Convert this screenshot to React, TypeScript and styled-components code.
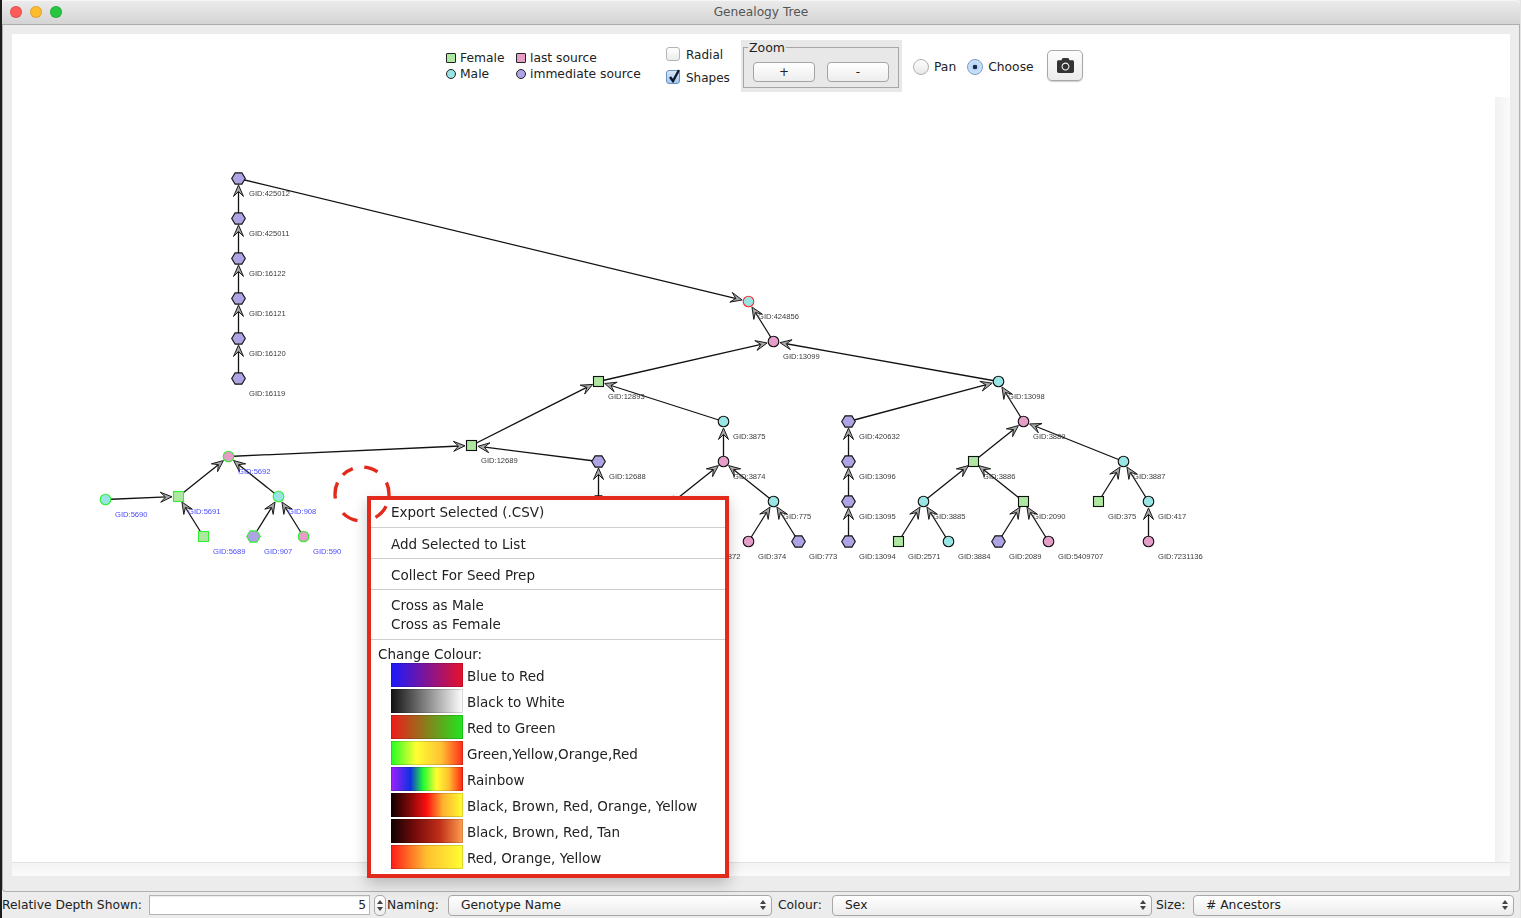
import React from "react";
import styled, { createGlobalStyle } from "styled-components";
import { FaCamera } from "react-icons/fa";

const UI_FONT = `"DejaVu Sans", "Liberation Sans", sans-serif`;

const GlobalStyle = createGlobalStyle`
  html, body {
    margin: 0;
    padding: 0;
    overflow: hidden;
    background: #dcdcdc;
  }
`;

const Root = styled.div`
  position: relative;
  width: 1521px;
  height: 918px;
  overflow: hidden;
  padding-left: 2px;
  box-sizing: border-box;
  font-family: ${UI_FONT};
  font-size: 12.3px;
  color: #222;
  background: linear-gradient(to right, #1c1c1c 2px, #e4e4e4 2px);
`;

const Window = styled.div`
  width: 1518px;
  height: 918px;
  display: flex;
  flex-direction: column;
  background: #ececec;
`;

const TitleBar = styled.div`
  height: 24px;
  flex: none;
  position: relative;
  display: flex;
  align-items: center;
  justify-content: center;
  border-bottom: 1px solid #adadad;
  border-radius: 5px 5px 0 0;
  background: linear-gradient(to bottom, #ececec, #d4d4d4);
  box-shadow: inset 0 1px 0 #f6f6f6;
  color: #555;
  font-size: 12.2px;
`;

const Lights = styled.div`
  position: absolute;
  left: 8px;
  top: 6px;
  display: flex;
  gap: 8px;
`;

const Light = styled.span<{ $color: string }>`
  width: 12px;
  height: 12px;
  border-radius: 50%;
  background: ${(p) => p.$color};
  box-shadow: inset 0 0 0 1px rgba(0, 0, 0, 0.12);
`;

const TabPanel = styled.div`
  height: 867px;
  flex: none;
  box-sizing: border-box;
  padding: 9px 9px 0 9px;
  border: 1px solid #b0b0b0;
  border-top: none;
  border-radius: 0 0 4px 4px;
`;

const TopBar = styled.div`
  height: 63px;
  padding-left: 434px;
  display: flex;
  align-items: center;
  background: #fff;
`;

const Legend = styled.div`
  width: 220px;
  display: grid;
  grid-template-columns: 70px 1fr;
`;

const LegendItem = styled.div`
  display: flex;
  align-items: center;
  gap: 4px;
  height: 16px;
`;

const Chip = styled.span<{ $color: string; $round?: boolean }>`
  width: 10px;
  height: 10px;
  box-sizing: border-box;
  border: 1px solid #222;
  border-radius: ${(p) => (p.$round ? "50%" : "1px")};
  background: ${(p) => p.$color};
`;

const Checks = styled.div`
  width: 75px;
  margin-top: 2px;
  display: flex;
  flex-direction: column;
  gap: 9px;
  font-size: 12px;
`;

const CheckRow = styled.div`
  display: flex;
  align-items: center;
  gap: 6px;
  height: 14px;
`;

const CheckBox = styled.span<{ $checked?: boolean }>`
  position: relative;
  width: 14px;
  height: 14px;
  margin-top: -2px;
  box-sizing: border-box;
  border: 1px solid ${(p) => (p.$checked ? "#6d8fc0" : "#b4b4b4")};
  border-radius: 3px;
  background: ${(p) =>
    p.$checked
      ? "linear-gradient(to bottom, #d5e6fa, #a3c8f2)"
      : "linear-gradient(to bottom, #fff, #ececec)"};
  svg {
    position: absolute;
    left: 0;
    top: -3px;
  }
`;

const ZoomPanel = styled.div`
  width: 161px;
  height: 52px;
  box-sizing: border-box;
  padding: 2px 3px 0 2px;
  background: #e8e8e8;
`;

const ZoomFieldset = styled.fieldset`
  margin: 0;
  height: 46px;
  box-sizing: border-box;
  padding: 8px 0 0 9px;
  display: flex;
  gap: 12px;
  border: 1px solid #a6a6a6;
  min-inline-size: 0;
`;

const ZoomLegend = styled.legend`
  padding: 0 1px;
  margin-left: -5px;
  font-size: 12.5px;
  line-height: 12px;
`;

const ZoomButton = styled.div`
  width: 62px;
  height: 20px;
  box-sizing: border-box;
  display: flex;
  align-items: center;
  justify-content: center;
  border: 1px solid #a4a4a4;
  border-radius: 4px;
  background: linear-gradient(to bottom, #fff, #ededed);
  font-size: 12px;
`;

const Radios = styled.div`
  width: 145px;
  padding-left: 11px;
  display: flex;
  align-items: center;
  gap: 11px;
  margin-top: 2px;
  box-sizing: border-box;
`;

const RadioChoice = styled.div`
  display: flex;
  align-items: center;
  gap: 5px;
`;

const RadioDot = styled.span<{ $on?: boolean }>`
  width: 16px;
  height: 16px;
  box-sizing: border-box;
  border-radius: 50%;
  border: 1px solid ${(p) => (p.$on ? "#7b9ac8" : "#b0b0b0")};
  background: ${(p) =>
    p.$on
      ? "radial-gradient(circle, #1d2a44 0 2px, #b9d5f6 2.6px, #dcebfc 100%)"
      : "linear-gradient(to bottom, #fdfdfd, #e8e8e8)"};
`;

const CameraButton = styled.div`
  width: 36px;
  height: 31px;
  box-sizing: border-box;
  display: flex;
  align-items: center;
  justify-content: center;
  border: 1px solid #a8a8a8;
  border-radius: 5px;
  background: linear-gradient(to bottom, #fcfcfc, #ececec);
  box-shadow: 0 1px 1px rgba(0, 0, 0, 0.2);
  color: #333;
  font-size: 17px;
  margin-bottom: 1px;
`;

const CanvasRow = styled.div`
  display: flex;
  height: 765px;
  background: #fff;
`;

const Canvas = styled.svg`
  display: block;
  width: 1483px;
  height: 765px;
  will-change: transform; /* own layer, keeps the tiny labels free of colour fringes */
`;

const VTrack = styled.div`
  width: 15px;
  background: linear-gradient(to right, #f1f1f1, #fbfbfb);
`;

const HTrack = styled.div`
  height: 14px;
  border-top: 1px solid #e2e2e2;
  box-sizing: border-box;
  background: linear-gradient(to bottom, #f3f3f3, #fbfbfb);
`;

const BottomBar = styled.div`
  flex: 1;
  display: flex;
  align-items: center;
`;

const BarLabel = styled.span<{ $w: number; $lead?: number }>`
  width: ${(p) => p.$w}px;
  padding-left: ${(p) => p.$lead ?? 0}px;
  box-sizing: border-box;
  flex: none;
  white-space: nowrap;
`;

const DepthInput = styled.div`
  width: 221px;
  height: 20px;
  flex: none;
  box-sizing: border-box;
  display: flex;
  align-items: center;
  justify-content: flex-end;
  padding-right: 3px;
  border: 1px solid #b4b4b4;
  background: #fff;
  box-shadow: inset 0 1px 1px rgba(0, 0, 0, 0.08);
`;

const Spinner = styled.div`
  width: 12px;
  height: 21px;
  flex: none;
  margin: 0 1px 0 4px;
  box-sizing: border-box;
  display: flex;
  flex-direction: column;
  align-items: center;
  justify-content: center;
  gap: 3px;
  border: 1px solid #a8a8a8;
  border-radius: 5px;
  background: linear-gradient(to bottom, #fff, #eee);
`;

const Select = styled.div<{ $w: number; $pad: number }>`
  width: ${(p) => p.$w}px;
  height: 21px;
  flex: none;
  box-sizing: border-box;
  display: flex;
  align-items: center;
  justify-content: space-between;
  padding: 0 5px 0 ${(p) => p.$pad}px;
  border: 1px solid #a8a8a8;
  border-radius: 4px;
  background: linear-gradient(to bottom, #fff, #ececec);
`;

const Arrows = styled.span`
  display: flex;
  flex-direction: column;
  gap: 2px;
`;

const Menu = styled.div`
  position: absolute;
  left: 367px;
  top: 496px;
  width: 362px;
  height: 382px;
  box-sizing: border-box;
  border: 4px solid #e3291b;
  background: #fff;
  box-shadow: 0 6px 14px rgba(0, 0, 0, 0.22);
  font-size: 13.5px;
`;

const MenuItem = styled.div<{ $first?: boolean }>`
  height: ${(p) => (p.$first ? 27 : 30)}px;
  box-sizing: content-box;
  padding: ${(p) => (p.$first ? "0 0 0 20px" : "0 0 0 20px")};
  display: flex;
  align-items: ${(p) => (p.$first ? "flex-start" : "flex-end")};
  line-height: ${(p) => (p.$first ? "25px" : "27px")};
  border-bottom: 1px solid #cfcfcf;
`;

const MenuStack = styled.div`
  height: 50px;
  padding: 6px 0 0 20px;
  box-sizing: border-box;
  border-bottom: 1px solid #cfcfcf;
  line-height: 19px;
`;

const MenuHeading = styled.div`
  margin-top: 5px;
  height: 18px;
  padding-left: 7px;
  line-height: 18px;
`;

const ColourList = styled.div`
  display: flex;
  flex-direction: column;
  gap: 2px;
  padding-left: 20px;
`;

const ColourRow = styled.div`
  height: 24px;
  display: flex;
  align-items: center;
  gap: 4px;
`;

const ColourName = styled.span`
  padding-top: 2px;
`;

const Swatch = styled.span<{ $fill: string }>`
  width: 72px;
  height: 24px;
  background: ${(p) => p.$fill};
  box-shadow: inset 0 0 0 1px rgba(0, 0, 0, 0.14);
`;

const CircleMark = styled.svg`
  position: absolute;
  left: 330px;
  top: 462px;
  pointer-events: none;
`;

type Kind = "F" | "M" | "L" | "I";

type TreeNode = {
  id: string;
  x: number;
  y: number;
  kind: Kind;
  lx?: number;
  ring?: string;
};

const GREEN = "#33ee33";

const kindFill: Record<Kind, string> = {
  F: "#aee8a0",
  M: "#99e5e3",
  L: "#e59ec8",
  I: "#aea3e5",
};

const nodes: TreeNode[] = [
  { id: "425012", x: 238, y: 178, kind: "I", lx: 11 },
  { id: "425011", x: 238, y: 218, kind: "I", lx: 11 },
  { id: "16122", x: 238, y: 258, kind: "I", lx: 11 },
  { id: "16121", x: 238, y: 298, kind: "I", lx: 11 },
  { id: "16120", x: 238, y: 338, kind: "I", lx: 11 },
  { id: "16119", x: 238, y: 378, kind: "I", lx: 11 },
  { id: "424856", x: 748, y: 301, kind: "M", ring: "#ff3030" },
  { id: "13099", x: 773, y: 341, kind: "L" },
  { id: "12893", x: 598, y: 381, kind: "F" },
  { id: "13098", x: 998, y: 381, kind: "M" },
  { id: "3875", x: 723, y: 421, kind: "M" },
  { id: "420632", x: 848, y: 421, kind: "I", lx: 11 },
  { id: "3889", x: 1023, y: 421, kind: "L" },
  { id: "12689", x: 471, y: 445, kind: "F" },
  { id: "12688", x: 598, y: 461, kind: "I", lx: 11 },
  { id: "3874", x: 723, y: 461, kind: "L" },
  { id: "13096", x: 848, y: 461, kind: "I", lx: 11 },
  { id: "3886", x: 973, y: 461, kind: "F" },
  { id: "3887", x: 1123, y: 461, kind: "M" },
  { id: "5692", x: 228, y: 456, kind: "L", ring: GREEN },
  { id: "5690", x: 105, y: 499, kind: "M", ring: GREEN },
  { id: "5691", x: 178, y: 496, kind: "F", ring: GREEN },
  { id: "908", x: 278, y: 496, kind: "M", ring: GREEN },
  { id: "5689", x: 203, y: 536, kind: "F", ring: GREEN },
  { id: "907", x: 253, y: 536, kind: "I", ring: GREEN, lx: 11 },
  { id: "590", x: 303, y: 536, kind: "L", ring: GREEN },
  { id: "775", x: 773, y: 501, kind: "M" },
  { id: "13095", x: 848, y: 501, kind: "I", lx: 11 },
  { id: "3885", x: 923, y: 501, kind: "M" },
  { id: "2090", x: 1023, y: 501, kind: "F" },
  { id: "375", x: 1098, y: 501, kind: "F" },
  { id: "417", x: 1148, y: 501, kind: "M" },
  { id: "3872", x: 698, y: 541, kind: "M" },
  { id: "374", x: 748, y: 541, kind: "L" },
  { id: "773", x: 798, y: 541, kind: "I", lx: 11 },
  { id: "13094", x: 848, y: 541, kind: "I", lx: 11 },
  { id: "2571", x: 898, y: 541, kind: "F" },
  { id: "3884", x: 948, y: 541, kind: "M" },
  { id: "2089", x: 998, y: 541, kind: "I", lx: 11 },
  { id: "5409707", x: 1048, y: 541, kind: "L" },
  { id: "7231136", x: 1148, y: 541, kind: "L" },
  // these two sit under the popup menu
  { id: "hidden-a", x: 598, y: 501, kind: "I" },
  { id: "hidden-b", x: 673, y: 501, kind: "M" },
];

// [from, to], the arrow head is drawn on the "to" end
const edges: [string, string][] = [
  ["425011", "425012"],
  ["16122", "425011"],
  ["16121", "16122"],
  ["16120", "16121"],
  ["16119", "16120"],
  ["425012", "424856"],
  ["13099", "424856"],
  ["12893", "13099"],
  ["13098", "13099"],
  ["3875", "12893"],
  ["12689", "12893"],
  ["3874", "3875"],
  ["775", "3874"],
  ["hidden-b", "3874"],
  ["3872", "hidden-b"],
  ["420632", "13098"],
  ["3889", "13098"],
  ["13096", "420632"],
  ["13095", "13096"],
  ["13094", "13095"],
  ["3886", "3889"],
  ["3887", "3889"],
  ["3885", "3886"],
  ["2090", "3886"],
  ["375", "3887"],
  ["417", "3887"],
  ["7231136", "417"],
  ["2571", "3885"],
  ["3884", "3885"],
  ["2089", "2090"],
  ["5409707", "2090"],
  ["374", "775"],
  ["773", "775"],
  ["5692", "12689"],
  ["12688", "12689"],
  ["hidden-a", "12688"],
  ["5691", "5692"],
  ["908", "5692"],
  ["5690", "5691"],
  ["5689", "5691"],
  ["907", "908"],
  ["590", "908"],
];

const swatches = [
  { name: "Blue to Red", fill: "linear-gradient(to right, #1a1aff, #e8102a)" },
  { name: "Black to White", fill: "linear-gradient(to right, #111, #fff)" },
  { name: "Red to Green", fill: "linear-gradient(to right, #f01a1a, #1ee61e)" },
  {
    name: "Green,Yellow,Orange,Red",
    fill: "linear-gradient(to right, #22ff22, #ffff33 35%, #ffc033 70%, #ff2a1a)",
  },
  {
    name: "Rainbow",
    fill: "linear-gradient(to right, #a020ff, #1030e0 27%, #20ff30 45%, #ffff30 63%, #ffc030 80%, #ff2010)",
  },
  {
    name: "Black, Brown, Red, Orange, Yellow",
    fill: "linear-gradient(to right, #100000, #7a0808 25%, #ff1010 50%, #ffb030 72%, #ffff30)",
  },
  {
    name: "Black, Brown, Red, Tan",
    fill: "linear-gradient(to right, #100000, #7a0c0c 35%, #c03018 68%, #ffa050)",
  },
  {
    name: "Red, Orange, Yellow",
    fill: "linear-gradient(to right, #ff1a1a, #ffc030 50%, #ffff33)",
  },
];

const byId = (id: string) => nodes.find((n) => n.id === id) as TreeNode;

function Edge({ from, to }: { from: TreeNode; to: TreeNode }) {
  const dx = to.x - from.x;
  const dy = to.y - from.y;
  const len = Math.hypot(dx, dy);
  const ux = dx / len;
  const uy = dy / len;
  const tipX = to.x - ux * 6.5;
  const tipY = to.y - uy * 6.5;
  const at = (back: number, side: number) =>
    `${tipX - ux * back - uy * side},${tipY - uy * back + ux * side}`;
  return (
    <g>
      <line
        x1={from.x}
        y1={from.y}
        x2={tipX - ux * 5}
        y2={tipY - uy * 5}
        stroke="#111"
        strokeWidth={1.3}
      />
      <polygon
        points={`${tipX},${tipY} ${at(11.5, 5)} ${at(6.5, 0)} ${at(11.5, -5)}`}
        fill="#a8a8a8"
        stroke="#1a1a1a"
        strokeWidth={1}
      />
    </g>
  );
}

function NodeMark({ node }: { node: TreeNode }) {
  const { x, y, kind, ring } = node;
  const common = { fill: kindFill[kind], stroke: ring ?? "#111", strokeWidth: 1.1 };
  if (kind === "F") {
    return <rect x={x - 5} y={y - 5} width={10} height={10} {...common} />;
  }
  if (kind === "I") {
    const pts = `${x - 6.8},${y} ${x - 3.4},${y - 5.6} ${x + 3.4},${y - 5.6} ${x + 6.8},${y} ${x + 3.4},${y + 5.6} ${x - 3.4},${y + 5.6}`;
    return <polygon points={pts} {...common} />;
  }
  return <circle cx={x} cy={y} r={5.3} {...common} />;
}

function UpDown() {
  return (
    <>
      <svg width={6} height={4} viewBox="0 0 6 4">
        <path d="M3 0 L6 4 L0 4 Z" fill="#444" />
      </svg>
      <svg width={6} height={4} viewBox="0 0 6 4">
        <path d="M0 0 L6 0 L3 4 Z" fill="#444" />
      </svg>
    </>
  );
}

export default function App() {
  return (
    <Root>
      <GlobalStyle />
      <Window>
        <TitleBar>
          <Lights>
            <Light $color="#fc5b57" />
            <Light $color="#fdbb2e" />
            <Light $color="#27c63f" />
          </Lights>
          Genealogy Tree
        </TitleBar>
        <TabPanel>
          <TopBar>
            <Legend>
              <LegendItem>
                <Chip $color={kindFill.F} />
                Female
              </LegendItem>
              <LegendItem>
                <Chip $color={kindFill.L} />
                last source
              </LegendItem>
              <LegendItem>
                <Chip $color={kindFill.M} $round />
                Male
              </LegendItem>
              <LegendItem>
                <Chip $color={kindFill.I} $round />
                immediate source
              </LegendItem>
            </Legend>
            <Checks>
              <CheckRow>
                <CheckBox />
                Radial
              </CheckRow>
              <CheckRow>
                <CheckBox $checked>
                  <svg width="15" height="16" viewBox="0 0 15 16">
                    <path
                      d="M3 9 L6 13 L12 2"
                      fill="none"
                      stroke="#10182a"
                      strokeWidth="2.4"
                    />
                  </svg>
                </CheckBox>
                Shapes
              </CheckRow>
            </Checks>
            <ZoomPanel>
              <ZoomFieldset>
                <ZoomLegend>Zoom</ZoomLegend>
                <ZoomButton>+</ZoomButton>
                <ZoomButton>-</ZoomButton>
              </ZoomFieldset>
            </ZoomPanel>
            <Radios>
              <RadioChoice>
                <RadioDot />
                Pan
              </RadioChoice>
              <RadioChoice>
                <RadioDot $on />
                Choose
              </RadioChoice>
            </Radios>
            <CameraButton>
              <FaCamera />
            </CameraButton>
          </TopBar>
          <CanvasRow>
            <Canvas viewBox="12 97 1483 765">
              <g transform="translate(0.5 0.5)">
                {edges.map(([a, b]) => (
                  <Edge key={a + b} from={byId(a)} to={byId(b)} />
                ))}
                {nodes.map((n) => (
                  <NodeMark key={n.id} node={n} />
                ))}
              </g>
              {nodes
                .filter((n) => !n.id.startsWith("hidden"))
                .map((n) => (
                  <text
                    key={n.id}
                    x={n.x + (n.lx ?? 10)}
                    y={n.y + 18}
                    fontFamily="Liberation Sans, sans-serif"
                    fontSize="7.6"
                    fill={n.ring === GREEN ? "#4a4aff" : "#3a3a3a"}
                  >
                    GID:{n.id}
                  </text>
                ))}
            </Canvas>
            <VTrack />
          </CanvasRow>
          <HTrack />
        </TabPanel>
        <BottomBar>
          <BarLabel $w={147}>Relative Depth Shown:</BarLabel>
          <DepthInput>5</DepthInput>
          <Spinner>
            <UpDown />
          </Spinner>
          <BarLabel $w={61}>Naming:</BarLabel>
          <Select $w={324} $pad={12}>
            Genotype Name
            <Arrows>
              <UpDown />
            </Arrows>
          </Select>
          <BarLabel $w={60} $lead={6}>
            Colour:
          </BarLabel>
          <Select $w={320} $pad={12}>
            Sex
            <Arrows>
              <UpDown />
            </Arrows>
          </Select>
          <BarLabel $w={41} $lead={4}>
            Size:
          </BarLabel>
          <Select $w={321} $pad={12}>
            # Ancestors
            <Arrows>
              <UpDown />
            </Arrows>
          </Select>
        </BottomBar>
      </Window>
      <Menu>
        <MenuItem $first>Export Selected (.CSV)</MenuItem>
        <MenuItem>Add Selected to List</MenuItem>
        <MenuItem>Collect For Seed Prep</MenuItem>
        <MenuStack>
          <div>Cross as Male</div>
          <div>Cross as Female</div>
        </MenuStack>
        <MenuHeading>Change Colour:</MenuHeading>
        <ColourList>
          {swatches.map((s) => (
            <ColourRow key={s.name}>
              <Swatch $fill={s.fill} />
              <ColourName>{s.name}</ColourName>
            </ColourRow>
          ))}
        </ColourList>
      </Menu>
      <CircleMark width="64" height="64" viewBox="0 0 64 64">
        <circle
          cx="32"
          cy="32"
          r="27"
          fill="none"
          stroke="#e3291b"
          strokeWidth="3.4"
          pathLength={360}
          strokeDasharray="7 20 33 40 35 35 35 20 25 25 30 30 25"
        />
      </CircleMark>
    </Root>
  );
}
